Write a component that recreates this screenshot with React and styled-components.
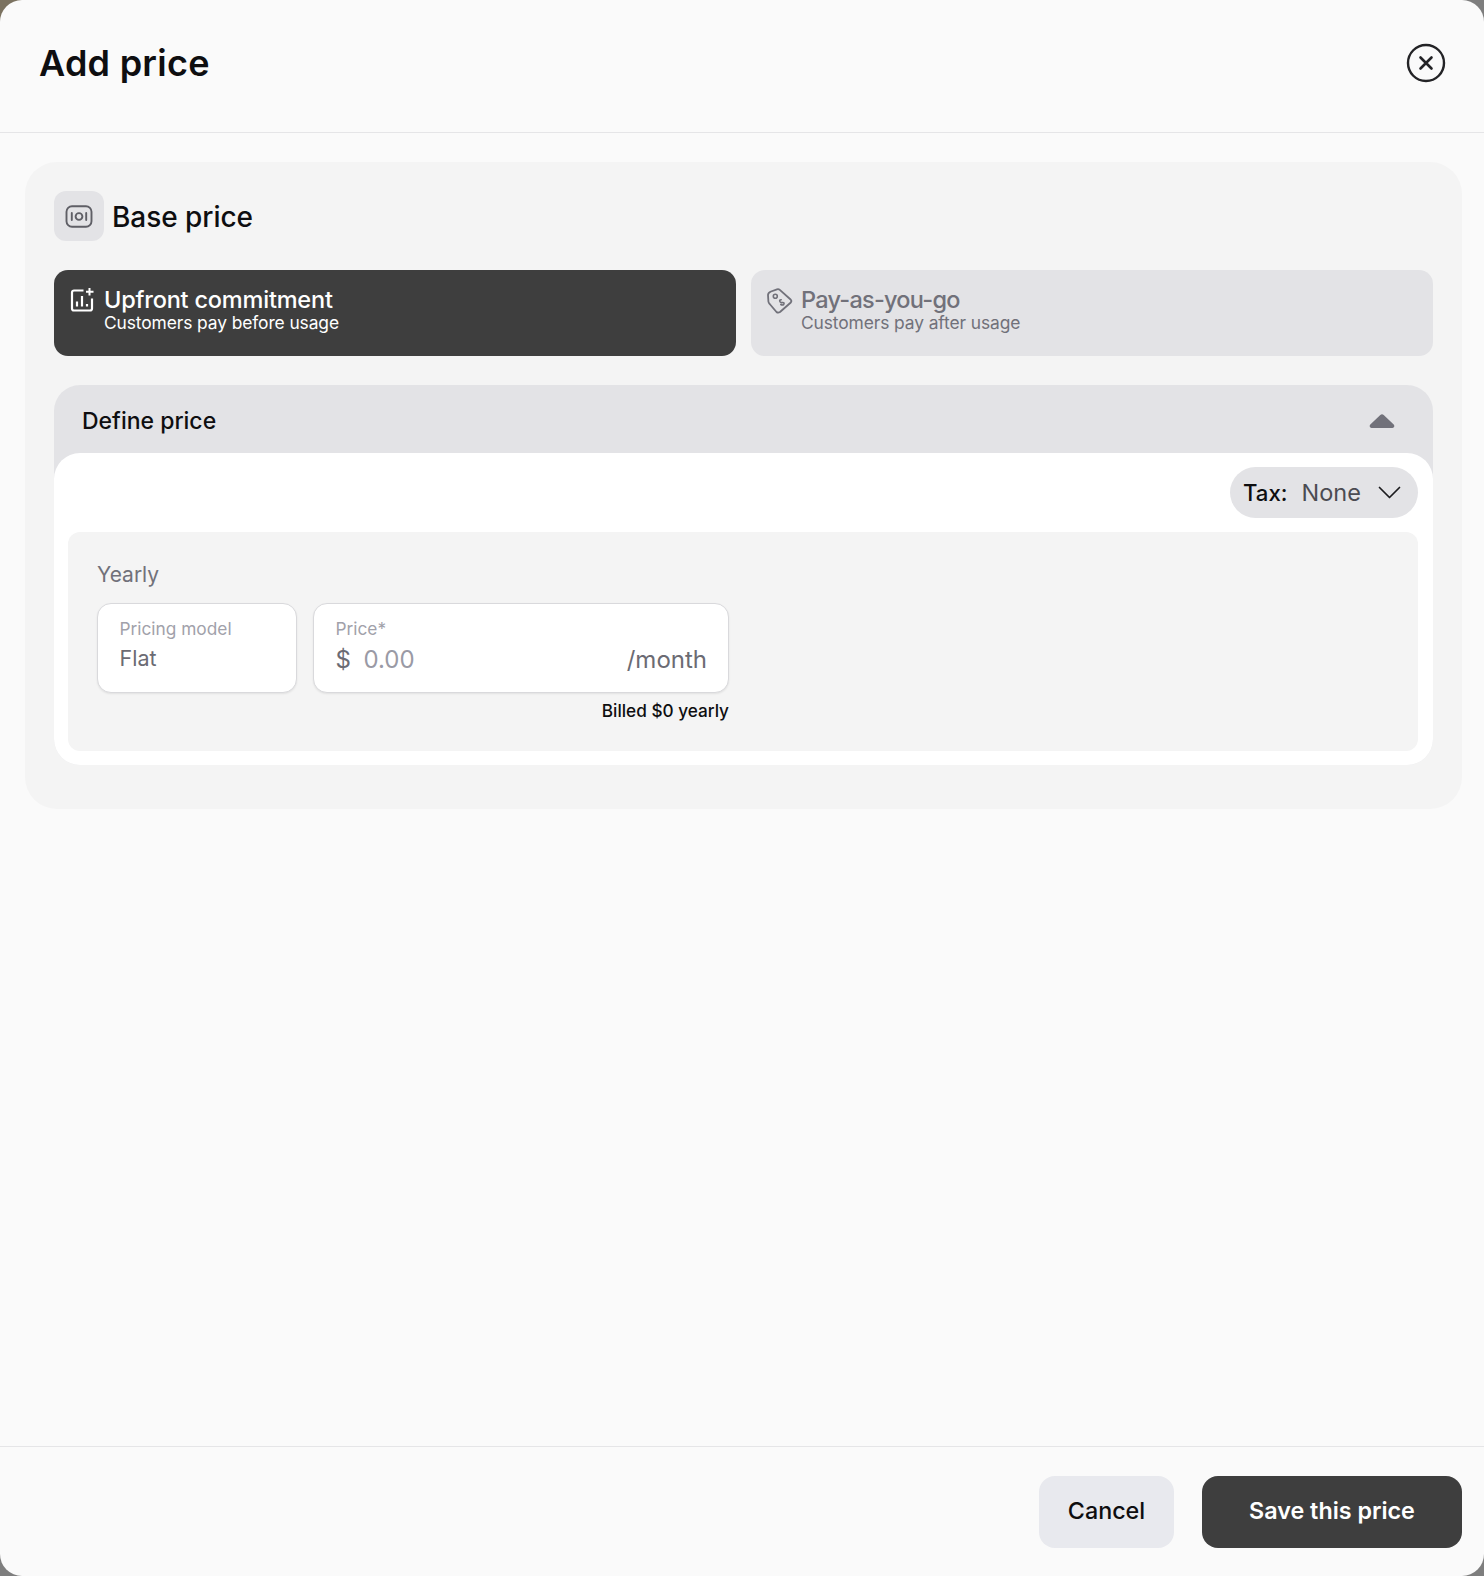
import React from "react";
import styled, { createGlobalStyle } from "styled-components";

const GlobalStyle = createGlobalStyle`
  html, body {
    margin: 0;
    padding: 0;
    background: radial-gradient(circle at 0 0, #7b7260 40px, #7e7e7e 41px);
  }
  * {
    box-sizing: border-box;
  }
`;

const Dialog = styled.div`
  display: flex;
  flex-direction: column;
  width: 1484px;
  height: 1576px;
  background: #fafafa;
  border-radius: 22px;
  color: #0e0e10;
  font-family: Inter, "Liberation Sans", sans-serif;
`;

const Header = styled.header`
  display: flex;
  align-items: center;
  justify-content: space-between;
  height: 133px;
  padding: 0 38px 6px 39px;
  border-bottom: 1px solid #e5e5e7;
`;

const Title = styled.h1`
  margin: 0;
  font-size: 36px;
  font-weight: 600;
  letter-spacing: 0.25px;
`;

const IconButton = styled.button`
  display: flex;
  padding: 0;
  border: 0;
  background: none;
  color: #232326;
`;

const Main = styled.main`
  flex: 1;
  padding: 29px 22px 0 25px;
`;

const Card = styled.section`
  display: flex;
  flex-direction: column;
  height: 647px;
  padding: 29px 29px 43px;
  border-radius: 32px;
  background: #f4f4f4;
`;

const SectionHead = styled.div`
  display: flex;
  align-items: center;
  gap: 8px;
  height: 50px;
`;

const IconTile = styled.div`
  display: flex;
  align-items: center;
  justify-content: center;
  width: 50px;
  height: 50px;
  border-radius: 12px;
  background: #e3e3e6;
  color: #5f5f66;
`;

const SectionTitle = styled.h2`
  margin: 1px 0 0;
  font-size: 28px;
  font-weight: 500;
  letter-spacing: -0.05px;
`;

const Options = styled.div`
  display: grid;
  grid-template-columns: 1fr 1fr;
  gap: 15px;
  margin-top: 29px;
`;

const Option = styled.div`
  display: flex;
  height: 86px;
  padding: 15px 16px 0;
  border-radius: 14px;
  background: ${({ $active }) => ($active ? "#3e3e3e" : "#e3e3e6")};
  color: ${({ $active }) => ($active ? "#ffffff" : "#71717a")};
`;

const OptionIcon = styled.div`
  flex: none;
  width: 34px;
  padding-top: 3px;
`;

const OptionText = styled.div`
  display: flex;
  flex-direction: column;
`;

const OptionTitle = styled.span`
  font-size: 23.5px;
  font-weight: 500;
  line-height: 30px;
  letter-spacing: ${({ $tight }) => ($tight ? "-0.75px" : "-0.2px")};
`;

const OptionSub = styled.span`
  margin-top: -1px;
  font-size: 17.4px;
  line-height: 17px;
  letter-spacing: -0.1px;
`;

const Accordion = styled.div`
  margin-top: 29px;
  border-radius: 26px;
  background: #e3e3e6;
`;

const AccordionHead = styled.div`
  display: flex;
  align-items: center;
  justify-content: space-between;
  height: 68px;
  padding: 3px 38px 0 28px;
  font-size: 23px;
  font-weight: 500;
`;

const AccordionBody = styled.div`
  display: flex;
  flex-direction: column;
  padding: 14px 15px 14px 14px;
  border-radius: 26px;
  background: #ffffff;
`;

const TaxPill = styled.div`
  display: flex;
  align-items: center;
  align-self: flex-end;
  width: 188px;
  height: 51px;
  padding: 0 17px 0 13px;
  border-radius: 26px;
  background: #e3e3e6;
`;

const TaxLabel = styled.span`
  font-size: 22.2px;
  font-weight: 500;
  color: #0e0e10;
`;

const TaxValue = styled.span`
  flex: 1;
  margin-left: 14px;
  font-size: 23.5px;
  color: #4b4b52;
`;

const Panel = styled.div`
  height: 219px;
  margin-top: 14px;
  padding: 29px 30px 0 29px;
  border-radius: 12px;
  background: #f4f4f4;
`;

const PanelTitle = styled.div`
  font-size: 21px;
  line-height: 28px;
  color: #71717a;
`;

const Fields = styled.div`
  display: flex;
  gap: 16px;
  margin-top: 14px;
`;

const Field = styled.div`
  display: flex;
  flex-direction: column;
  width: ${({ $width }) => $width}px;
  height: 90px;
  padding: 15px 21px 0 21.5px;
  border: 1px solid #d9d9dc;
  border-radius: 14px;
  background: #ffffff;
  box-shadow: 0 1px 2px rgba(0, 0, 0, 0.08);
`;

const FieldLabel = styled.span`
  font-size: 17.3px;
  line-height: 20px;
  color: #a1a1aa;
`;

const FieldRow = styled.div`
  display: flex;
  align-items: center;
  margin-top: 7px;
  font-size: 24px;
  line-height: 28px;
  color: #6b6b73;
`;

const FlatValue = styled(FieldRow)`
  margin-top: 6px;
  font-size: 21.5px;
  line-height: 26px;
`;

const Placeholder = styled.span`
  flex: 1;
  margin-left: 12.5px;
  color: #9a9aa5;
`;

const Hint = styled.div`
  width: 632px;
  margin-top: 7px;
  font-size: 17.2px;
  font-weight: 500;
  line-height: 22px;
  text-align: right;
  color: #0e0e10;
`;

const Footer = styled.footer`
  display: flex;
  justify-content: flex-end;
  gap: 28px;
  height: 130px;
  padding: 29px 22px 0 0;
  border-top: 1px solid #e5e5e7;
`;

const Button = styled.button`
  width: ${({ $width }) => $width}px;
  height: 72px;
  padding: 0 0 3px;
  border: 0;
  border-radius: 16px;
  background: ${({ $primary }) => ($primary ? "#3e3e3e" : "#e8e9ee")};
  color: ${({ $primary }) => ($primary ? "#ffffff" : "#0e0e10")};
  font-family: inherit;
  font-size: 23.3px;
  font-weight: ${({ $primary }) => ($primary ? 600 : 500)};
`;

const CloseIcon = () => (
  <svg width="40" height="40" viewBox="0 0 40 40" fill="none" stroke="currentColor">
    <circle cx="20" cy="20" r="18" strokeWidth="2.4" />
    <path d="M14.5 14.5l11 11M25.5 14.5l-11 11" strokeWidth="2.6" strokeLinecap="round" />
  </svg>
);

const BillIcon = () => (
  <svg width="28" height="23" viewBox="0 0 28 23" fill="none" stroke="currentColor" strokeWidth="1.9">
    <rect x="1.5" y="1.2" width="25" height="20.6" rx="5.5" />
    <path d="M6.8 8v7M21.2 8v7" strokeLinecap="round" />
    <circle cx="14" cy="11.5" r="3.4" />
  </svg>
);

const ChartIcon = () => (
  <svg width="24" height="24" viewBox="0 0 24 24" fill="none" stroke="currentColor" strokeWidth="2.2">
    <path d="M13.5 2.5H4a2 2 0 0 0-2 2v16a2 2 0 0 0 2 2h16a2 2 0 0 0 2-2V10.5" />
    <path d="M7 18.5v-5M12 18.5V8M17 18.5V16" />
    <path d="M19.5 0v7.5M16 3.7h7.5" strokeWidth="2" />
  </svg>
);

const TagIcon = () => (
  <svg width="26" height="26" viewBox="0 0 26 26" fill="none" stroke="currentColor" strokeWidth="1.8">
    <path d="M4 3.5L10 1.3Q11.6.8 12.8 1.9L23.6 11.5Q25 13 23.8 14.5L13 24Q11 25.3 9.5 24L2.7 16Q1.5 14.8 1.4 13.5L1 7Q1 4.7 4 3.5z" strokeLinejoin="round" />
    <circle cx="8.3" cy="8.3" r="2" strokeWidth="1.6" />
    <path d="M14.2 11.700Q12 11.800 13 13.700Q14.200 15 15.500 14.500Q17.800 14.400 16.700 16.500Q15.400 17.500 13.800 16.500" strokeWidth="1.6" strokeLinecap="round" />
  </svg>
);

const Caret = () => (
  <svg width="26" height="14" viewBox="0 0 26 14" fill="#71717a">
    <path d="M11.3 1l-10 9.500c-1.200 1.200-.6 3.500 1.300 3.500h20.800c1.900 0 2.500-2.300 1.300-3.500L14.700 1a2.400 2.400 0 0 0-3.400 0z" />
  </svg>
);

const Chevron = () => (
  <svg width="23" height="13" viewBox="0 0 23 13" fill="none" stroke="#1c1c1f" strokeWidth="1.7">
    <path d="M1.5 1.500l10 10 10-10" strokeLinecap="round" strokeLinejoin="round" />
  </svg>
);

const App = () => (
  <>
    <GlobalStyle />
    <Dialog>
      <Header>
        <Title>Add price</Title>
        <IconButton>
          <CloseIcon />
        </IconButton>
      </Header>
      <Main>
        <Card>
          <SectionHead>
            <IconTile>
              <BillIcon />
            </IconTile>
            <SectionTitle>Base price</SectionTitle>
          </SectionHead>
          <Options>
            <Option $active>
              <OptionIcon>
                <ChartIcon />
              </OptionIcon>
              <OptionText>
                <OptionTitle>Upfront commitment</OptionTitle>
                <OptionSub>Customers pay before usage</OptionSub>
              </OptionText>
            </Option>
            <Option>
              <OptionIcon>
                <TagIcon />
              </OptionIcon>
              <OptionText>
                <OptionTitle $tight>Pay-as-you-go</OptionTitle>
                <OptionSub>Customers pay after usage</OptionSub>
              </OptionText>
            </Option>
          </Options>
          <Accordion>
            <AccordionHead>
              Define price
              <Caret />
            </AccordionHead>
            <AccordionBody>
              <TaxPill>
                <TaxLabel>Tax:</TaxLabel>
                <TaxValue>None</TaxValue>
                <Chevron />
              </TaxPill>
              <Panel>
                <PanelTitle>Yearly</PanelTitle>
                <Fields>
                  <Field $width={200}>
                    <FieldLabel>Pricing model</FieldLabel>
                    <FlatValue>Flat</FlatValue>
                  </Field>
                  <Field $width={416}>
                    <FieldLabel>Price*</FieldLabel>
                    <FieldRow>
                      $<Placeholder>0.00</Placeholder>/month
                    </FieldRow>
                  </Field>
                </Fields>
                <Hint>Billed $0 yearly</Hint>
              </Panel>
            </AccordionBody>
          </Accordion>
        </Card>
      </Main>
      <Footer>
        <Button $width={135}>Cancel</Button>
        <Button $primary $width={260}>
          Save this price
        </Button>
      </Footer>
    </Dialog>
  </>
);

export default App;
